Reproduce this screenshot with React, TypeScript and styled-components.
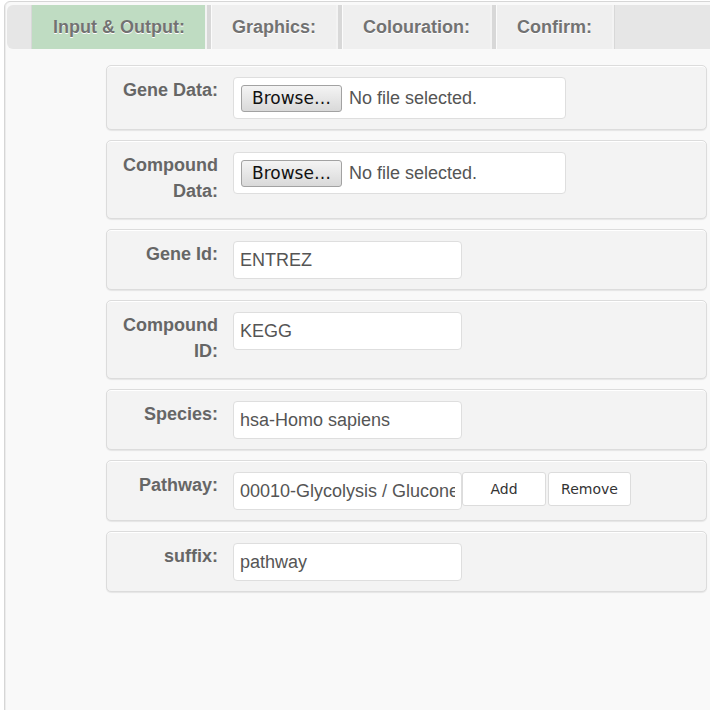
import React from "react";
import styled, { createGlobalStyle } from "styled-components";

const GlobalStyle = createGlobalStyle`
  body {
    margin: 0;
    background: #fff;
    overflow: hidden;
    font-family: "Liberation Sans", Arial, sans-serif;
  }
`;

const Frame = styled.div`
  margin: 1px 0 0 4px;
  width: 800px;
  min-height: 760px;
  padding: 3px 2px;
  background: #f9f9f9;
  border: 1px solid #d6d6d6;
  border-radius: 6px;
  box-shadow: inset 1px 0 0 #ececec;
`;

const TabBar = styled.div`
  display: flex;
  height: 44px;
  padding-left: 24px;
  background: #e6e6e6;
  border-radius: 6px;
`;

const TabList = styled.div`
  display: flex;
  gap: 4px;
  padding: 0 1px;
  background: #d8d8d8;
`;

const Tab = styled.div<{ $active?: boolean }>`
  display: flex;
  align-items: center;
  padding: 0 20px;
  background: ${(p) => (p.$active ? "#bfdcc2" : "#efefef")};
  border-left: 1px solid ${(p) => (p.$active ? "#bfdcc2" : "#fbfbfb")};
  border-right: 2px solid #f3f3f3;
  font-size: 18px;
  font-weight: bold;
  color: #727272;
  text-shadow: 0 1px 0 #fff;
  white-space: nowrap;
`;

const Content = styled.div`
  display: flex;
  flex-direction: column;
  gap: 10px;
  padding: 16px 0 0 99px;
`;

const Panel = styled.div`
  display: grid;
  grid-template-columns: 111px auto;
  column-gap: 15px;
  align-items: start;
  width: 601px;
  box-sizing: border-box;
  padding: 11px 0 10px;
  background: #f3f3f3;
  border: 1px solid #dcdcdc;
  border-radius: 5px;
  box-shadow: inset 0 1px 0 #fff, 0 1px 1px rgba(0, 0, 0, 0.08);
`;

const Label = styled.label`
  margin-bottom: 4px;
  text-align: right;
  font-size: 18px;
  font-weight: bold;
  line-height: 26px;
  color: #666;
`;

const FileBox = styled.div`
  display: flex;
  align-items: center;
  gap: 7px;
  width: 333px;
  height: 42px;
  box-sizing: border-box;
  padding-left: 7px;
  background: #fff;
  border: 1px solid #dedede;
  border-radius: 4px;
`;

const BrowseButton = styled.button`
  height: 27px;
  padding: 0 10px;
  background: linear-gradient(#f4f4f4, #d9d9d9);
  border: 1px solid #a2a2a2;
  border-radius: 3px;
  font-family: "DejaVu Sans", sans-serif;
  font-size: 17px;
  color: #111;
`;

const FileName = styled.span`
  font-size: 18px;
  color: #555;
`;

const TextField = styled.input`
  width: 229px;
  height: 38px;
  box-sizing: border-box;
  padding: 0 6px;
  background: #fff;
  border: 1px solid #dedede;
  border-radius: 4px;
  font-family: "Liberation Sans", Arial, sans-serif;
  font-size: 18px;
  color: #555;
  outline: none;
`;

const FieldGroup = styled.div`
  display: flex;
  align-items: flex-start;
`;

const SmallButton = styled.button<{ $width: number; $gap?: number }>`
  width: ${(p) => p.$width}px;
  height: 34px;
  margin-left: ${(p) => p.$gap ?? 0}px;
  background: #fff;
  border: 1px solid #dcdcdc;
  border-radius: 3px;
  font-family: "DejaVu Sans", sans-serif;
  font-size: 14px;
  color: #333;
`;

const tabs = ["Input & Output:", "Graphics:", "Colouration:", "Confirm:"];

const fileFields = ["Gene Data:", "Compound Data:"];

const textFields = [
  { label: "Gene Id:", value: "ENTREZ" },
  { label: "Compound ID:", value: "KEGG" },
  { label: "Species:", value: "hsa-Homo sapiens" },
];

export default function App() {
  return (
    <>
      <GlobalStyle />
      <Frame>
        <TabBar>
          <TabList>
            {tabs.map((t, i) => (
              <Tab key={t} $active={i === 0}>
                {t}
              </Tab>
            ))}
          </TabList>
        </TabBar>

        <Content>
          {fileFields.map((f) => (
            <Panel key={f}>
              <Label>{f}</Label>
              <FileBox>
                <BrowseButton>Browse…</BrowseButton>
                <FileName>No file selected.</FileName>
              </FileBox>
            </Panel>
          ))}

          {textFields.map((f) => (
            <Panel key={f.label}>
              <Label>{f.label}</Label>
              <TextField readOnly value={f.value} />
            </Panel>
          ))}

          <Panel>
            <Label>Pathway:</Label>
            <FieldGroup>
              <TextField readOnly value="00010-Glycolysis / Gluconeogenesis" />
              <SmallButton $width={84}>Add</SmallButton>
              <SmallButton $width={83} $gap={2}>
                Remove
              </SmallButton>
            </FieldGroup>
          </Panel>

          <Panel>
            <Label>suffix:</Label>
            <TextField readOnly value="pathway" />
          </Panel>
        </Content>
      </Frame>
    </>
  );
}
